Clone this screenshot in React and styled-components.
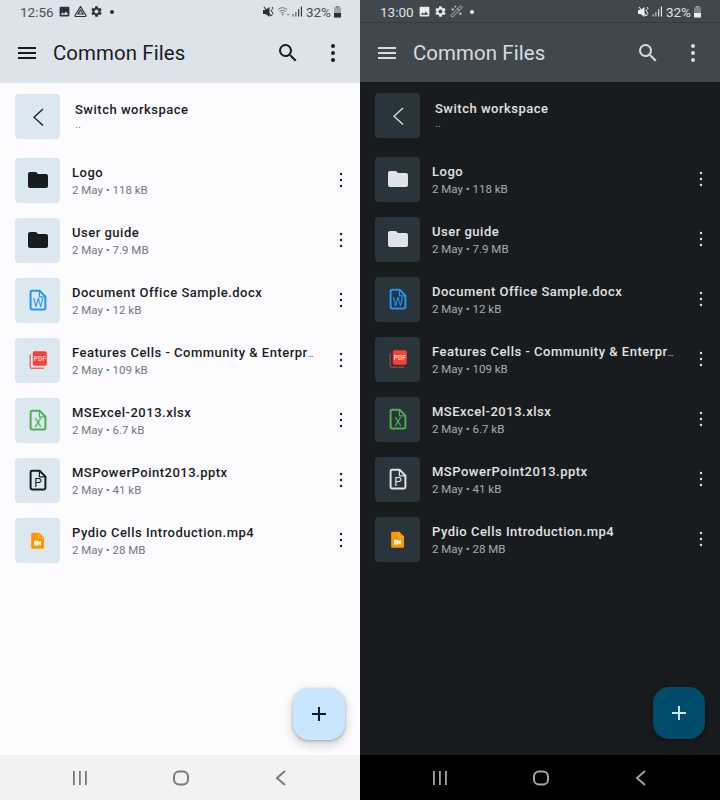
import React from 'react';
import styled, { createGlobalStyle, ThemeProvider } from 'styled-components';
import { MdMenu, MdSearch, MdFolder, MdImage, MdSettings, MdAdd } from 'react-icons/md';
import { Wand2 } from 'lucide-react';

const light = {
  status: '#dde3ea', statusLine: '#dde3ea', statusText: '#4a5156', statusIcon: '#2a3034',
  header: '#dde3ea', headerText: '#191c1e', bg: '#fcfcff', tile: '#dce8ef',
  title: '#191c1e', sub: '#6f787d', folder: '#191c1e', plain: '#191c1e',
  fab: '#cae6ff', fabText: '#001e2e', fabTop: 688, nav: '#f2f2f2', navIcon: '#77797b',
  pdfBack: '#ee6b66', headerHeight: 60, headerTop: 0,
};

const dark = {
  status: '#41484d', statusLine: '#33393d', statusText: '#dfe2e5', statusIcon: '#eceef0',
  header: '#41484d', headerText: '#d9dde0', bg: '#191c1e', tile: '#29343b',
  title: '#e1e2e5', sub: '#a6adb2', folder: '#e1e2e5', plain: '#e1e2e5',
  fab: '#004c6b', fabText: '#cae6ff', fabTop: 687, nav: '#000000', navIcon: '#a5a5a5',
  pdfBack: '#a83a36', headerHeight: 59, headerTop: 1,
};

const files = [
  { name: 'Logo', meta: '2 May • 118 kB', kind: 'folder' },
  { name: 'User guide', meta: '2 May • 7.9 MB', kind: 'folder' },
  { name: 'Document Office Sample.docx', meta: '2 May • 12 kB', kind: 'word' },
  { name: 'Features Cells - Community & Enterpr', cut: true, meta: '2 May • 109 kB', kind: 'pdf' },
  { name: 'MSExcel-2013.xlsx', meta: '2 May • 6.7 kB', kind: 'excel' },
  { name: 'MSPowerPoint2013.pptx', meta: '2 May • 41 kB', kind: 'slides' },
  { name: 'Pydio Cells Introduction.mp4', meta: '2 May • 28 MB', kind: 'video' },
];

const GlobalStyle = createGlobalStyle`
  html, body { margin: 0; padding: 0; background: #fff; }
  body { font-family: Roboto, "Liberation Sans", sans-serif; }
`;

const Screens = styled.div`
  display: grid;
  grid-template-columns: 360px 360px;
  width: 720px;
  height: 800px;
  overflow: hidden;
`;

const Phone = styled.div`
  position: relative;
  display: flex;
  flex-direction: column;
  height: 800px;
  background: ${p => p.theme.bg};
`;

const StatusBar = styled.div`
  display: flex;
  align-items: center;
  justify-content: space-between;
  box-sizing: border-box;
  height: 23px;
  padding: 1px 18px 0 20px;
  background: ${p => p.theme.status};
  border-bottom: 1px solid ${p => p.theme.statusLine};
  color: ${p => p.theme.statusText};
`;

const StatusGroup = styled.div`
  display: flex;
  align-items: center;
  gap: ${p => p.$gap || 0}px;
  color: ${p => p.theme.statusIcon};
`;

const Clock = styled.span`
  font-size: 13.5px;
  margin-right: 1px;
  color: ${p => p.theme.statusText};
`;

const Percent = styled.span`
  font-size: 13.5px;
  margin-left: 1px;
  color: ${p => p.theme.statusText};
`;

const Dot = styled.span`
  width: 4px;
  height: 4px;
  margin-left: 4px;
  border-radius: 50%;
  background: ${p => p.theme.statusIcon};
`;

const Header = styled.header`
  display: flex;
  align-items: center;
  box-sizing: border-box;
  height: ${p => p.theme.headerHeight}px;
  padding: ${p => p.theme.headerTop}px 13px 0 15px;
  background: ${p => p.theme.header};
  color: ${p => p.theme.headerText};
`;

const Title = styled.h1`
  flex: 1;
  margin: 0 0 0 14px;
  font-size: 20.4px;
  font-weight: 400;
  letter-spacing: 0.1px;
  color: ${p => p.theme.headerText};
`;

const HeaderIcons = styled.div`
  display: flex;
  align-items: center;
  gap: 19px;
`;

const List = styled.main`
  flex: 1;
  padding-top: 11px;
`;

const BackRow = styled.div`
  display: flex;
  align-items: center;
  gap: 15px;
  padding: 0 15px;
  margin-bottom: 11px;
`;

const Row = styled.div`
  display: flex;
  align-items: center;
  gap: 12px;
  height: 60px;
  padding: 0 9px 0 15px;
`;

const Tile = styled.div`
  display: flex;
  flex: none;
  align-items: center;
  justify-content: center;
  width: 45px;
  height: 45px;
  border-radius: 4px;
  background: ${p => p.theme.tile};
  color: ${p => p.$color || p.theme.plain};
`;

const RowText = styled.div`
  display: flex;
  flex: 1;
  flex-direction: column;
  min-width: 0;
  margin-top: ${p => p.$offset}px;
`;

const Name = styled.div`
  font-size: 13px;
  font-weight: 500;
  line-height: 17px;
  letter-spacing: 0.5px;
  white-space: nowrap;
  color: ${p => p.theme.title};
`;

const Ellipsis = styled.span`
  font-size: 8px;
  line-height: 0;
  letter-spacing: 0;
`;

const Meta = styled.div`
  margin-top: 2px;
  font-size: 11.5px;
  line-height: 15px;
  color: ${p => p.theme.sub};
`;

const Parent = styled(Meta)`
  margin-top: -2px;
  line-height: 16px;
`;

const RowMenu = styled.div`
  display: flex;
  flex: none;
  justify-content: center;
  width: 20px;
  margin-left: 5px;
  color: ${p => p.theme.plain};
`;

const Fab = styled.button`
  position: absolute;
  top: ${p => p.theme.fabTop}px;
  right: 15px;
  display: flex;
  align-items: center;
  justify-content: center;
  width: 52px;
  height: 52px;
  padding: 0;
  border: 0;
  border-radius: 16px;
  background: ${p => p.theme.fab};
  color: ${p => p.theme.fabText};
  box-shadow: 0 4px 8px 2px rgba(0, 0, 0, 0.14), 0 1px 3px rgba(0, 0, 0, 0.26);
`;

const NavBar = styled.nav`
  display: grid;
  grid-template-columns: 160px 41px 160px;
  justify-items: center;
  align-items: center;
  height: 45px;
  background: ${p => p.theme.nav};
  color: ${p => p.theme.navIcon};
`;

const PdfContext = React.createContext('#ee6b66');

function DriveIcon() {
  return (
    <svg width="13" height="13" viewBox="0 0 13 13" fill="none" stroke="currentColor" strokeWidth="1.2">
      <path d="M6.5 1.5 L12 10.5 Q12 11.5 11 11.5 H2 Q1 11.5 1 10.5 Z" strokeLinejoin="round" />
      <path d="M6.5 5 L9 9 H4 Z" />
    </svg>
  );
}

function MuteIcon() {
  return (
    <svg width="12" height="12" viewBox="0 0 12 12" fill="currentColor">
      <path d="M0 4 H2.5 L6.5 1 V11 L2.5 8 H0 Z" />
      <path d="M1 1 L8 10" stroke="currentColor" strokeWidth="1.2" />
      <path d="M9 1 q2 1.2 0 2.5 q-1.6 1.2 0 2.5 q2 1.2 0 2.5 q-0.8 .6 0 1.5" fill="none" stroke="currentColor" strokeWidth="1" />
    </svg>
  );
}

function WifiIcon() {
  return (
    <svg width="13" height="11" viewBox="0 0 14 11" fill="none" stroke="currentColor" strokeWidth="1" opacity="0.65">
      <path d="M1 3.5 Q6 -0.8 11 3.5" />
      <path d="M2.6 5.5 Q6 2.6 9.4 5.5" />
      <path d="M4.2 7.4 Q6 5.8 7.8 7.4" />
      <circle cx="6" cy="9" r="0.8" fill="currentColor" stroke="none" />
      <path d="M11.5 8 V9.5 M13 8 V9.5" />
    </svg>
  );
}

function SignalIcon() {
  return (
    <svg width="11" height="11" viewBox="0 0 11 11" fill="currentColor">
      <rect x="0.5" y="8" width="1.1" height="2.5" opacity="0.8" />
      <rect x="3.3" y="6" width="1.1" height="4.5" opacity="0.8" />
      <rect x="6.1" y="3" width="1.1" height="7.5" />
      <rect x="8.9" y="0.5" width="1.1" height="10" />
    </svg>
  );
}

function BatteryIcon() {
  return (
    <svg width="9" height="12" viewBox="0 0 9 12">
      <rect x="2.8" y="0" width="3.4" height="1.4" fill="currentColor" opacity="0.55" />
      <rect x="1" y="1.2" width="7" height="10.3" rx="0.8" fill="currentColor" opacity="0.35" />
      <path d="M1 7 H8 V10.7 Q8 11.5 7.2 11.5 H1.8 Q1 11.5 1 10.7 Z" fill="currentColor" />
    </svg>
  );
}

// three dots, thinner than the stock material icon
function Dots({ size, r, step }) {
  const c = size / 2;
  return (
    <svg width={size} height={size} viewBox={`0 0 ${size} ${size}`} fill="currentColor">
      <circle cx={c} cy={c - step} r={r} />
      <circle cx={c} cy={c} r={r} />
      <circle cx={c} cy={c + step} r={r} />
    </svg>
  );
}

// document outline with a folded corner, the letter sits inside as real text
function DocIcon({ letter }) {
  return (
    <svg width="24" height="24" viewBox="0 0 24 24" fill="none" stroke="currentColor" strokeWidth="2" strokeLinejoin="round">
      <path d="M6 2.8 H13.6 L19.4 8.6 V20 Q19.4 21.4 18 21.4 H6 Q4.6 21.4 4.6 20 V4.2 Q4.6 2.8 6 2.8 Z" />
      <path d="M13.4 3 V8.8 H19" strokeWidth="1.2" />
      <text
        x="12"
        y="19"
        textAnchor="middle"
        fontFamily="Roboto, sans-serif"
        fontSize="12"
        fontWeight="400"
        fill="currentColor"
        stroke="none"
      >
        {letter}
      </text>
    </svg>
  );
}

function PdfIcon() {
  const back = React.useContext(PdfContext);
  return (
    <svg width="24" height="24" viewBox="0 0 24 24" fill="none">
      <path d="M4.2 6.5 V18.8 Q4.2 20.3 5.7 20.3 H18" stroke={back} strokeWidth="1.4" />
      <rect x="6.8" y="3.2" width="14" height="14.5" rx="1.6" fill="#f44336" />
      <text x="13.8" y="12.8" textAnchor="middle" fontFamily="Roboto, sans-serif" fontSize="6.5" fontWeight="700" fill="#f8c9c5">
        PDF
      </text>
    </svg>
  );
}

function VideoIcon() {
  return (
    <svg width="21" height="21" viewBox="0 0 24 24">
      <path
        d="M6.2 3 H14 L19.5 8.5 V20 Q19.5 21.4 18.1 21.4 H6.2 Q4.8 21.4 4.8 20 V4.4 Q4.8 3 6.2 3 Z"
        fill="#ff9800"
      />
      <path d="M13.4 3.4 V9 H19" fill="none" stroke="#ffc46b" strokeWidth="0.7" />
      <path d="M8 12.4 H13.4 V14 L16 12.4 V17.8 L13.4 16.2 V17.8 H8 Z" fill="#fff3dd" />
    </svg>
  );
}

function FileIcon({ kind }) {
  if (kind === 'folder') return <Tile><MdFolder size={24} /></Tile>;
  if (kind === 'word') return <Tile $color="#2196f3"><DocIcon letter="W" /></Tile>;
  if (kind === 'pdf') return <Tile><PdfIcon /></Tile>;
  if (kind === 'excel') return <Tile $color="#4caf50"><DocIcon letter="X" /></Tile>;
  if (kind === 'video') return <Tile><VideoIcon /></Tile>;
  return <Tile><DocIcon letter="P" /></Tile>;
}

function Back() {
  return (
    <svg width="24" height="24" viewBox="0 0 24 24" fill="none" stroke="currentColor" strokeWidth="1.3">
      <path d="M17 4 L8 12.3 L17 20.5" />
    </svg>
  );
}

function NavRecents() {
  return (
    <svg width="16" height="14" viewBox="0 0 16 14" fill="currentColor">
      <rect x="1" y="0" width="1.8" height="14" />
      <rect x="7" y="0" width="1.8" height="14" />
      <rect x="13" y="0" width="1.8" height="14" />
    </svg>
  );
}

function NavHome() {
  return (
    <svg width="16" height="16" viewBox="0 0 16 16" fill="none" stroke="currentColor" strokeWidth="2">
      <rect x="1" y="1.5" width="14" height="13" rx="5" />
    </svg>
  );
}

function NavBack() {
  return (
    <svg width="12" height="16" viewBox="0 0 12 16" fill="none" stroke="currentColor" strokeWidth="1.9">
      <path d="M10 1 L2 8 L10 15" />
    </svg>
  );
}

function Screen({ theme, time, extra }) {
  return (
    <ThemeProvider theme={theme}>
      <PdfContext.Provider value={theme.pdfBack}>
        <Phone>
          <StatusBar>
            <StatusGroup $gap={3}>
              <Clock>{time}</Clock>
              {extra}
              <Dot />
            </StatusGroup>
            <StatusGroup $gap={2}>
              <MuteIcon />
              {theme === light && <WifiIcon />}
              <SignalIcon />
              <Percent>32%</Percent>
              <BatteryIcon />
            </StatusGroup>
          </StatusBar>
          <Header>
            <MdMenu size={24} />
            <Title>Common Files</Title>
            <HeaderIcons>
              <MdSearch size={24} />
              <Dots size={28} r={2} step={7} />
            </HeaderIcons>
          </Header>
          <List>
            <BackRow>
              <Tile><Back /></Tile>
              <RowText $offset={-1}>
                <Name>Switch workspace</Name>
                <Parent>..</Parent>
              </RowText>
            </BackRow>
            {files.map(f => (
              <Row key={f.name}>
                <FileIcon kind={f.kind} />
                <RowText $offset={2}>
                  <Name>{f.name}{f.cut && <Ellipsis>…</Ellipsis>}</Name>
                  <Meta>{f.meta}</Meta>
                </RowText>
                <RowMenu><Dots size={20} r={1.2} step={6} /></RowMenu>
              </Row>
            ))}
          </List>
          <Fab aria-label="Add"><MdAdd size={24} /></Fab>
          <NavBar>
            <NavRecents />
            <NavHome />
            <NavBack />
          </NavBar>
        </Phone>
      </PdfContext.Provider>
    </ThemeProvider>
  );
}

export default function App() {
  return (
    <>
      <GlobalStyle />
      <Screens>
        <Screen
          theme={light}
          time="12:56"
          extra={<><MdImage size={13} /><DriveIcon /><MdSettings size={13} /></>}
        />
        <Screen
          theme={dark}
          time="13:00"
          extra={<><MdImage size={13} /><MdSettings size={13} /><Wand2 size={13} strokeWidth={1.2} /></>}
        />
      </Screens>
    </>
  );
}
